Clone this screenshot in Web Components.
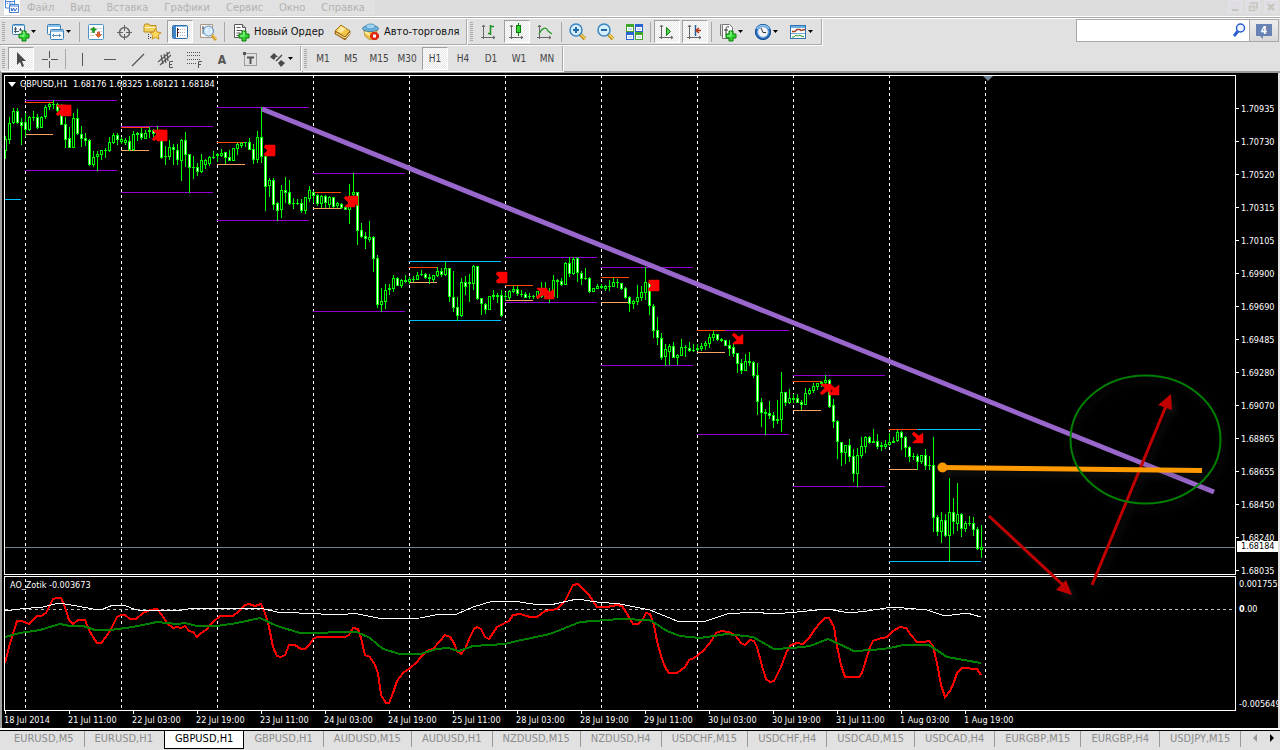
<!DOCTYPE html>
<html lang="ru">
<head>
<meta charset="utf-8">
<title>GBPUSD,H1</title>
<style>
    html, body { height: 100%; margin: 0; }
    body {
        --face: #e1e1e1;
        --shade: #a8a8a8;
        background: var(--face);
        font-family: "DejaVu Sans Condensed", "Noto Sans", sans-serif;
        font-size: 11px;
        color: #111;
        overflow: hidden;
    }
</style>
</head>
<body>
<trade-terminal>
    <app-menu slot="menu" items="Файл,Вид,Вставка,Графики,Сервис,Окно,Справка"></app-menu>

    <tool-bar slot="standard">
        <tool-button icon="newchart" label="Новый график" menu></tool-button>
        <tool-button icon="profiles" label="Профили" menu></tool-button>
        <tool-split></tool-split>
        <tool-button icon="market" label="Обзор рынка"></tool-button>
        <tool-button icon="target" label="Окно данных"></tool-button>
        <tool-button icon="navigator" label="Навигатор"></tool-button>
        <tool-button icon="terminal" label="Терминал" active></tool-button>
        <tool-button icon="tester" label="Тестер стратегий"></tool-button>
        <tool-split></tool-split>
        <tool-button icon="order">Новый Ордер</tool-button>
        <tool-button icon="book" label="MetaEditor"></tool-button>
        <tool-button icon="auto">Авто-торговля</tool-button>
    </tool-bar>
    <tool-bar slot="standard">
        <tool-button icon="bars" label="Бары"></tool-button>
        <tool-button icon="candles" label="Японские свечи" active></tool-button>
        <tool-button icon="line" label="Линия"></tool-button>
        <tool-split></tool-split>
        <tool-button icon="zoomin" label="Увеличить"></tool-button>
        <tool-button icon="zoomout" label="Уменьшить"></tool-button>
        <tool-button icon="tile" label="Окна мозаикой"></tool-button>
        <tool-split></tool-split>
        <tool-button icon="autoscroll" label="Автопрокрутка" active></tool-button>
        <tool-button icon="shift" label="Сдвиг графика" active></tool-button>
        <tool-split></tool-split>
        <tool-button icon="indicators" label="Индикаторы" menu></tool-button>
        <tool-button icon="clock" label="Периоды" menu></tool-button>
        <tool-button icon="template" label="Шаблоны" menu></tool-button>
    </tool-bar>
    <search-box slot="search" count="4"></search-box>

    <tool-bar slot="studies">
        <tool-button icon="cursor" label="Курсор" active></tool-button>
        <tool-button icon="cross" label="Перекрестие"></tool-button>
        <tool-split></tool-split>
        <tool-button icon="vline" label="Вертикальная линия"></tool-button>
        <tool-button icon="hline" label="Горизонтальная линия"></tool-button>
        <tool-button icon="trend" label="Трендовая линия"></tool-button>
        <tool-button icon="channel" label="Канал"></tool-button>
        <tool-button icon="fibo" label="Фибоначчи"></tool-button>
        <tool-button icon="text" label="Текст"></tool-button>
        <tool-button icon="label" label="Текстовая метка"></tool-button>
        <tool-button icon="arrows" label="Стрелки" menu></tool-button>
    </tool-bar>
    <tool-bar slot="studies">
        <tool-button>M1</tool-button>
        <tool-button>M5</tool-button>
        <tool-button>M15</tool-button>
        <tool-button>M30</tool-button>
        <tool-button active>H1</tool-button>
        <tool-button>H4</tool-button>
        <tool-button>D1</tool-button>
        <tool-button>W1</tool-button>
        <tool-button>MN</tool-button>
    </tool-bar>

    <chart-view slot="chart"></chart-view>
    <symbol-tabs slot="tabs" current="2"
        items="EURUSD,M5 EURUSD,H1 GBPUSD,H1 GBPUSD,H1 AUDUSD,M15 AUDUSD,H1 NZDUSD,M15 NZDUSD,H4 USDCHF,M15 USDCHF,H4 USDCAD,M15 USDCAD,H4 EURGBP,M15 EURGBP,H4 USDJPY,M15"></symbol-tabs>
</trade-terminal>

<script>
const AXES = '<path d="M4.5 3v14M2 15.5h14M3 5l1.5-2L6 5M14 14l2 1.5-2 1.5" fill="none" stroke="#666"/>';
const PLUS = '<path d="M11 9h4v3h3v4h-3v3h-4v-3H8v-4h3z" fill="#2fd42f" stroke="#0b7a0b"/><path d="M12 10h1v4h-4" fill="none" stroke="#a6ffa6"/>';
const GLASS = '<path d="M12 12l5 5" stroke="#b98a16" stroke-width="3.5"/><path d="M12.5 12l5 5" stroke="#f7d962" stroke-width="1.5"/><circle cx="8" cy="8" r="6" fill="#d5efff" stroke="#3a86c0" stroke-width="1.5"/>';

const ICONS = {
    newchart: `<rect x="1.5" y="2.5" width="12" height="10" rx="1" fill="#f4f9fd" stroke="#3a80b8"/><path d="M2 3.5h11" stroke="#7fb7e0"/><path d="M4.5 5v6M3 7h3M3 9.5h5M9.5 6v3M8 8h3" stroke="#456" fill="none"/>${PLUS}`,
    profiles: '<rect x="1.5" y="2.5" width="13" height="10" rx="1" fill="#fff" stroke="#3a80b8"/><path d="M2 4h12" stroke="#8cc0e6" stroke-width="2"/><rect x="4.5" y="7.5" width="13" height="10" rx="1" fill="#f4f9fd" stroke="#3a80b8"/><path d="M5 9h12" stroke="#8cc0e6" stroke-width="2"/><path d="M6 13.5h9M7.5 12v3M13.5 12v3" fill="none" stroke="#5b8fb8"/>',
    market: '<rect x="2.5" y="2.5" width="15" height="15" rx="1" fill="#fff" stroke="#4a94cc"/><path d="M4 6.5h2M9 6.5h7M4 10.5h2M12 9.5h4M4 13.5h4" stroke="#d4d4d4"/><path d="M7.500 5l3 3h-2v2.500h-2V8h-2z" fill="#1fa51f" stroke="#0c6d0c" stroke-width=".6"/><path d="M12.500 15.500l-3-3h2V10h2v2.500h2z" fill="#f0602c" stroke="#a5330c" stroke-width=".6"/>'.replace(/\.500/g, '.5'),
    target: '<circle cx="10.5" cy="10.5" r="5" fill="none" stroke="#666" stroke-width="1.5"/><path d="M10.5 3v6M10.5 12v6M3 10.5h6M12 10.5h6" stroke="#666"/>',
    navigator: '<path d="M2 4l1-2h4l1 1.5h6V10H2z" fill="#f3cf5d" stroke="#b88d1f"/><path d="M2.5 5.5h11" stroke="#fff3b8"/><path d="M6.5 12v6M8 15.5h2" stroke="#333" stroke-dasharray="1 1"/><path d="M13.5 6.5l1.7 3.6 3.9.5-2.9 2.7.8 3.9-3.5-2-3.5 2 .8-3.9L7.9 10.6l3.9-.5z" fill="#ffd95a" stroke="#c4912a"/>',
    terminal: '<rect x="2.5" y="3.5" width="15" height="13" rx="1" fill="#fff" stroke="#2f6fae"/><path d="M3 4.5h14" stroke="#8fc1e8"/><rect x="3" y="4" width="3" height="12" fill="#3f86c8"/><path d="M7.5 6v9" stroke="#222"/><path d="M10 7.5h6M10 10.5h6M10 13.5h5" stroke="#b4b4c4" stroke-dasharray="1 1"/><path d="M8 7.5h1M8 10.5h1" stroke="#c00"/>',
    tester: '<path d="M2.5 2.5h12v13h-12z" fill="#f5f5f5" stroke="#a98"/><path d="M5 4v8M4 6h3M12 4v6" stroke="#666"/><circle cx="10.5" cy="9" r="5" fill="#cfeaff" fill-opacity=".85" stroke="#5d8fba"/><path d="M8 9l2-2M13 7v4" stroke="#fff"/><path d="M14 13l4 5" stroke="#d19a24" stroke-width="3"/><path d="M14.5 12.5l4 5" stroke="#f9df7d"/>',
    order: `<path d="M3.5 2.5h8l3 3v10h-11z" fill="#fff" stroke="#555"/><path d="M11.5 2.5v3h3" fill="#ddd" stroke="#555"/><path d="M5.5 5.5h4M5.5 8.5h6M5.5 11h4M5.5 13.5h3" stroke="#555"/>${PLUS}`,
    book: '<path d="M8 3l9 6-5 6-10-6z" fill="#f3c549" stroke="#a2731a"/><path d="M8 4l-4 5 4 2 5-4z" fill="#ffe99b"/><path d="M2 9v3l10 6v-3zM12 15v3l5-6V9z" fill="#b87a1a" stroke="#8b5c10" stroke-width=".6"/><path d="M3 11l9 5 5-5" fill="none" stroke="#f7e3a8"/>',
    auto: '<path d="M3 8h13l-1 7-6 3-5-4z" fill="#f1c548" stroke="#a87b1a" stroke-width=".7"/><path d="M4 10l5 3" stroke="#fff1b0" stroke-width="2"/><ellipse cx="9.5" cy="6.5" rx="8" ry="3" fill="#6fb6de" stroke="#397ba5"/><ellipse cx="9.5" cy="4.5" rx="4.5" ry="2.5" fill="#9cd4f2" stroke="#397ba5" stroke-width=".7"/><path d="M11.5 10h4l2.5 2.5v3L15.500 18h-4L9 15.5v-3z" fill="#e02a10"/><rect x="12" y="12.5" width="3" height="3" fill="#fff"/>'.replace('15.500', '15.5'),
    bars: AXES + '<path d="M11.5 3v10M9 11.5h2M12 4.5h3" fill="none" stroke="#1c8f1c" stroke-width="1.5"/>',
    candles: AXES + '<path d="M11.5 1v13" stroke="#0c7a0c"/><rect x="9.5" y="3.5" width="4" height="7" fill="#32d232" stroke="#0c7a0c"/>',
    line: AXES + '<path d="M4 12c3-6 7-8 9-3l4 3" fill="none" stroke="#2c9a2c" stroke-width="1.3"/>',
    zoomin: GLASS + '<path d="M5 8h6M8 5v6" stroke="#2269a3" stroke-width="2"/>',
    zoomout: GLASS + '<path d="M5 8h6" stroke="#2269a3" stroke-width="2"/>',
    tile: '<path d="M2 2h8v8H2zM11 10h8v8h-8z" fill="#3fa52c"/><path d="M11 2h8v8h-8zM2 10h8v8H2z" fill="#2a62d0"/><path d="M3 5h6v4H3zM12 5h6v4h-6zM3 13h6v4H3zM12 13h6v4h-6z" fill="#fff"/><path d="M4 7h4M13 7h4M4 15h4M13 15h4" stroke="#9bd"/>',
    autoscroll: AXES + '<path d="M9.5 5.5v8l4-4z" fill="#4fd34f" stroke="#128012"/>',
    shift: AXES + '<path d="M10.5 3v11" stroke="#1f5f9c" stroke-width="1.5"/><path d="M11 8.5h5M14 6l-3 2.5 3 2.5" fill="none" stroke="#b2330c" stroke-width="1.3"/>',
    indicators: `<path d="M4.5 2.5h7l3 3v11h-10z" fill="#fff" stroke="#777"/><path d="M3.5 2.5h-1v11h1" fill="none" stroke="#777"/><path d="M11 5c-3-1-3 1-3 3v5M6 8h4" fill="none" stroke="#333"/>${PLUS}`,
    clock: '<circle cx="10" cy="10" r="8" fill="#2a74c8"/><circle cx="10" cy="10" r="7.5" fill="none" stroke="#144a8c"/><path d="M4 7a7 7 0 0 1 12 0" fill="none" stroke="#8cc8f8" stroke-width="1.5"/><circle cx="10" cy="10" r="5.2" fill="#f2f6fa" stroke="#9cb9d6"/><path d="M8 6l2 4.5h3" fill="none" stroke="#333"/>',
    template: '<rect x="2.5" y="3.5" width="15" height="13" fill="#fff" stroke="#2e73b3"/><path d="M3 5h14" stroke="#6daee0" stroke-width="2"/><path d="M3 11.5h14" stroke="#79add8"/><path d="M4 9.5h3l2-2h3l1 1 4-1" fill="none" stroke="#a33c1a" stroke-width="1.3"/><path d="M4 15h2l2-2 2 1 2-1 2 1.5h2" fill="none" stroke="#2c9a2c"/>',
    cursor: '<path d="M6 3v13l3-3 2 5 2-1-2-5h4z" fill="#4a4a4a"/>',
    cross: '<path d="M10.5 2v7M10.5 12v7M3 10.5h6M12 10.5h7" stroke="#555"/>',
    vline: '<path d="M10.5 4v13" stroke="#555"/>',
    hline: '<path d="M4 10.5h12" stroke="#555"/>',
    trend: '<path d="M4 17L16 5" stroke="#555" stroke-width="1.2"/>',
    channel: '<path d="M2 13L14 3M4 16L15 6M5 6l2 9M8 5l2 9M11 3l1 9" stroke="#555" stroke-width="1.2"/><path d="M17 12.5h-3.5v6H17M13.5 15.5H16" fill="none" stroke="#555"/>',
    fibo: '<path d="M3 3.5h14M3 6.5h14M3 10.5h14M3 14.5h9" stroke="#555" stroke-dasharray="1 1"/><path d="M18 12.5h-3.5V19M14.5 15.5H17" fill="none" stroke="#555"/>',
    label: '<rect x="4.5" y="4.5" width="12" height="12" fill="none" stroke="#555" stroke-dasharray="1 1"/><path d="M3 3h3v3H3z" fill="#555"/><path d="M7 8.500h7M10.500 8v7" fill="none" stroke="#555" stroke-width="2"/>'.replace(/\.500/g, '.5'),
    text: '<text x="10" y="15" text-anchor="middle" font-size="12" font-weight="bold" fill="#555">A</text>',
    arrows: '<path d="M6 4l4 4H8l-2 3-4-3z" fill="#4a4a4a"/><path d="M8 12l6-6" stroke="#4a4a4a" stroke-width="1.5"/><path d="M13 11l4 3-4 4-3-4z" fill="#4a4a4a"/>'
};

class TradeTerminal extends HTMLElement {
    constructor() {
        super();
        this.attachShadow({ mode: 'open' }).innerHTML = `
        <style>
            :host { display: flex; flex-direction: column; height: 100vh; }
            .row { display: flex; height: 27px; flex: none; }
            .second { height: 25px; border-bottom: 2px solid #999; }
            .fill { flex: 1; }
            .chart { flex: 1; min-height: 0; display: grid; }
        </style>
        <slot name="menu"></slot>
        <div class="row"><slot name="standard"></slot><span class="fill"></span><slot name="search"></slot></div>
        <div class="row second"><slot name="studies"></slot></div>
        <div class="chart"><slot name="chart"></slot></div>
        <slot name="tabs"></slot>`;
    }
}

class AppMenu extends HTMLElement {
    constructor() {
        super();
        this.attachShadow({ mode: 'open' });
    }

    connectedCallback() {
        const items = this.getAttribute('items').split(',');
        this.shadowRoot.innerHTML = `
        <style>
            :host {
                display: flex; height: 16px; flex: none;
                background: #dcdcdc;
                border-bottom: 1px solid #fff;
                box-shadow: inset 0 -1px var(--shade), inset 0 -2px #fff;
                padding-bottom: 2px;
            }
            nav { display: flex; align-items: center; gap: 16px; background: var(--face); height: 15px; padding: 0 10px 0 4px; }
            a { color: #b2b2b2; text-decoration: none; line-height: 14px; }
            .logo { margin-right: -9px; flex: none; }
            .win { margin-left: auto; display: flex; gap: 4px; padding-right: 2px; }
            button { width: 14px; height: 13px; padding: 0; border: 1px solid #e4e2e8; background: #dfdde2; display: grid; place-items: center; }
        </style>
        <nav>
            <svg class="logo" width="16" height="15" viewBox="0 0 16 15"><path d="M0 0h16v15H0z" fill="#fff"/><path d="M1.5 0v8h4M1.5 1.5h9M10.5 0v4M3 3.5h1M6 2v4M8 3v2M5.5 4.5h9v8h-9zM5 6h10" fill="none" stroke="#4a86d8"/><path d="M7 8l1 3 1.5-3 1.5 3L13 8" fill="none" stroke="#2a62c0"/></svg>
            ${items.map(t => `<a href="#">${t}</a>`).join('')}
        </nav>
        <div class="win">
            <button aria-label="Свернуть"><svg width="10" height="10"><path d="M2 8h6" stroke="#c6c6ba" stroke-width="2"/></svg></button>
            <button aria-label="Восстановить"><svg width="10" height="10"><path d="M3 2V1h6v5H8M1.5 4.5h5v4h-5z" fill="none" stroke="#c6c6ba" stroke-width="1.5"/></svg></button>
            <button aria-label="Закрыть"><svg width="10" height="10"><path d="M2 2l6 6M8 2L2 8" stroke="#c6c6ba" stroke-width="2"/></svg></button>
        </div>`;
    }
}

class ToolBar extends HTMLElement {
    constructor() {
        super();
        this.attachShadow({ mode: 'open' }).innerHTML = `
        <style>
            :host {
                display: flex; align-items: center; gap: 2px; height: 25px;
                padding: 0 3px 0 2px;
                border-right: 1px solid var(--shade);
                border-bottom: 1px solid var(--shade);
                box-shadow: 1px 1px #fff;
                margin-right: 1px;
            }
            :host([slot="studies"]) { border-bottom: 0; padding-right: 2px; }
            .grip { width: 3px; height: 19px; margin-right: 1px; background: repeating-linear-gradient(var(--shade) 0 1px, transparent 1px 2px); }
        </style>
        <span class="grip"></span><slot></slot>`;
    }
}

class ToolSplit extends HTMLElement {
    constructor() {
        super();
        this.attachShadow({ mode: 'open' }).innerHTML = `
        <style>
            :host { display: block; width: 1px; height: 20px; margin: 0 1px; background: var(--shade); }
        </style>`;
    }
}

class ToolButton extends HTMLElement {
    constructor() {
        super();
        this.attachShadow({ mode: 'open' });
    }

    connectedCallback() {
        const icon = this.getAttribute('icon');
        const label = this.getAttribute('label');
        this.shadowRoot.innerHTML = `
        <style>
            :host { display: block; }
            :host([menu]) { margin-right: -2px; }
            button {
                display: flex; align-items: center; justify-content: center;
                min-width: 26px; height: 23px; padding: 0 2px;
                border: 1px solid transparent; background: none;
                font: inherit; color: inherit; white-space: nowrap;
            }
            .frame { font-size: 10px; color: #444; padding: 0; }
            .wide { padding: 0 3px 0 2px; gap: 3px; }
            :host([active]) button {
                border-color: #a0a0a0 #fff #fff #a0a0a0;
                background: repeating-conic-gradient(#fff 0 25%, #e6e6e6 0 50%) 0 0 / 2px 2px;
            }
            svg { flex: none; }
            .drop { margin: 0 2px 0 -2px; }
        </style>
        <button class="${icon ? (label ? '' : 'wide') : 'frame'}" ${label ? `aria-label="${label}"` : ''}>
            ${icon ? `<svg width="20" height="20" viewBox="0 0 20 20">${ICONS[icon]}</svg>` : ''}
            <slot></slot>
            ${this.hasAttribute('menu') ? '<svg class="drop" width="9" height="5"><path d="M2 1h5L4.5 4z"/></svg>' : ''}
        </button>`;
    }
}

class SearchBox extends HTMLElement {
    constructor() {
        super();
        this.attachShadow({ mode: 'open' });
    }

    connectedCallback() {
        this.shadowRoot.innerHTML = `
        <style>
            :host { display: flex; height: 23px; margin-right: 1px; }
            label { display: flex; align-items: center; width: 172px; background: #fff; border: 1px solid var(--shade); }
            input { flex: 1; min-width: 0; border: 0; outline: 0; background: none; font: inherit; }
            button { width: 29px; padding: 0; border: 1px solid var(--shade); border-left: 0; background: linear-gradient(#eee, #d8d8d8); display: grid; place-items: center; }
            text { font: bold 10px "DejaVu Sans Condensed", sans-serif; fill: #fff; }
        </style>
        <label><input type="search" aria-label="Поиск">
            <svg width="18" height="18"><path d="M7 9l-4 5" stroke="#2a5fd0" stroke-width="3"/><circle cx="9.5" cy="6" r="4" fill="#eef6ff" stroke="#2a5fd0" stroke-width="1.5"/></svg>
        </label>
        <button aria-label="Сообщения"><svg width="18" height="18"><path d="M1 2h16v12H8v3l-3-3H1z" fill="#6882b4"/><text x="9" y="12" text-anchor="middle">${this.getAttribute('count')}</text></svg></button>`;
    }
}

// [first bar x, "high top bottom low kind; ..."]: d = falling, u = rising
const BARS = [
    [5, '136 139 151 159 u;117 123 140 144 u;108 111 123 124 u;108 111 123 124 d;118 122 126 145 d'],
    [25, '113 122 130 137 d;116 117 130 131 u;111 117 118 121 u;114 117 128 129 d;116 117 128 128 u;105 107 117 119 u;103 104 107 110 u;100 104 105 109 u;103 104 111 115 d;104 110 125 125 d;117 124 140 148 d;127 138 148 148 d'],
    [73, '113 118 148 148 u;109 118 134 135 d;126 134 139 147 d;133 138 141 146 d;139 140 165 166 d;151 157 165 167 u;151 154 157 171 u;150 150 155 160 u;148 150 151 158 d;137 142 151 152 u;133 135 143 144 u;133 135 140 145 d'],
    [121, '137 139 142 144 u;138 140 143 145 u;136 141 150 151 d;131 134 150 151 u;132 133 135 141 u;128 133 138 140 d;130 133 139 139 u;127 130 132 138 u;129 130 134 137 d;126 130 137 140 d;139 140 158 159 d;146 156 157 165 d'],
    [169, '140 147 157 160 u;144 147 150 165 d;144 150 160 165 d;139 140 161 181 u;132 140 155 167 d;154 154 168 193 d;156 167 168 179 u;163 167 172 176 d;154 160 172 173 u;159 160 165 169 u;156 157 164 166 u;151 157 158 159 u'],
    [217, '153 154 156 162 u;149 153 156 157 u;152 152 158 164 d;150 157 161 161 d;148 148 161 161 u;143 144 149 155 u;142 143 146 148 u;142 142 143 147 u;138 142 150 150 d;144 149 160 164 d;131 137 160 163 u;107 137 157 163 d'],
    [265, '155 156 187 211 d;178 180 186 197 u;178 180 205 210 d;202 203 211 221 d;185 190 210 218 u;177 190 193 203 d;180 192 204 205 d;198 203 204 209 u;199 203 204 205 u;199 203 211 213 d;197 197 211 214 u;186 190 199 202 u'],
    [313, '191 192 196 203 d;194 195 204 206 d;195 196 204 208 u;195 196 203 208 d;196 197 205 208 u;197 197 207 208 d;202 203 206 208 u;203 204 208 209 d;207 207 210 210 d;184 197 210 224 u;173 192 195 207 u;192 192 231 245 d'],
    [361, '223 230 237 238 d;232 236 239 249 d;221 237 240 242 u;236 237 259 272 d;255 258 305 308 d;288 301 305 312 u;284 290 302 309 u;284 288 290 295 d;275 278 289 292 u;277 278 286 286 d;279 280 286 288 u;275 280 282 283 u'],
    [409, '277 279 282 284 u;276 279 280 282 u;272 275 280 280 u;270 274 275 276 u;273 274 278 279 d;274 277 279 284 d;275 275 280 282 u;267 271 276 277 u;268 271 275 277 d;262 268 275 276 u;268 268 297 302 d;271 297 308 312 d'],
    [457, '297 307 316 321 d;278 282 316 317 u;276 282 287 295 d;274 282 284 302 u;265 266 284 290 u;266 266 299 300 d;298 298 304 315 d;303 304 310 314 d;296 296 310 310 u;290 295 297 300 u;293 295 297 303 u;290 295 316 317 d'],
    [505, '292 296 297 301 u;290 291 298 300 u;286 289 292 293 u;286 289 294 296 d;290 294 295 297 u;292 294 298 298 d;293 296 297 299 u;295 296 297 299 u;291 291 297 299 u;282 291 297 298 u;282 290 297 298 d;288 294 297 303 u'],
    [553, '275 280 297 298 u;279 280 282 298 u;278 281 285 286 d;262 263 285 285 u;257 263 274 277 d;257 259 274 275 u;257 258 273 282 d;271 273 279 285 d;268 278 279 280 u;277 278 292 293 d;288 288 292 292 u;284 286 289 289 u'],
    [601, '284 286 288 289 u;285 286 289 291 u;280 286 287 291 u;278 282 287 287 u;279 282 283 288 u;283 283 289 290 d;287 288 298 299 d;296 297 304 312 d;300 301 304 309 u;285 297 302 305 u;286 292 298 301 u;267 282 293 300 u'],
    [649, '282 283 306 315 d;304 306 331 338 d;317 330 338 345 d;333 338 358 360 d;344 349 357 366 u;344 346 352 365 u;342 346 358 358 d;354 355 358 365 u;339 347 356 356 u;345 347 348 357 u;342 348 351 352 d;344 350 351 352 u'],
    [697, '344 348 350 351 u;343 346 349 351 u;341 343 346 350 u;334 337 344 348 u;331 334 338 341 u;334 334 340 341 d;338 339 341 342 d;340 340 346 346 d;340 345 349 356 d;344 347 354 357 d;353 353 364 373 d;359 363 371 374 d'],
    [745, '354 361 371 371 u;352 361 363 366 d;361 362 376 378 d;363 375 402 415 d;398 402 413 427 d;409 412 414 435 d;401 413 416 419 d;412 415 421 428 d;400 419 421 424 d;372 392 420 432 u;392 392 403 406 d;389 398 403 404 u'],
    [793, '394 398 400 403 u;394 398 403 403 d;400 402 405 410 d;388 393 405 405 u;388 390 394 395 u;383 386 391 393 u;383 383 387 390 u;381 382 384 387 u;375 380 383 385 u;379 380 407 408 d;399 405 422 428 d;420 421 442 459 d'],
    [841, '442 442 453 466 d;445 445 453 464 u;439 445 457 462 d;449 456 474 482 d;448 455 474 487 u;437 446 456 458 u;436 437 447 453 u;436 437 443 444 d;429 441 443 443 u;434 441 447 449 d;442 445 447 451 d;440 444 447 449 u'],
    [889, '433 442 445 446 u;437 441 443 443 u;430 432 441 442 u;431 432 438 450 d;436 437 448 457 d;446 447 457 462 d;453 456 457 460 u;454 456 462 470 d;455 455 462 464 u;449 455 466 470 d;456 465 466 470 u;437 465 518 532 d'],
    [937, '515 517 532 536 d;512 520 532 543 u;514 520 536 537 d;478 512 536 561 u;498 512 522 534 d;483 514 524 531 u;513 514 529 537 d;521 523 529 532 u;516 523 524 526 u;517 523 530 536 d;527 529 549 550 d;525 547 550 558 u']
];

// [day x, day high, early high, early low, day low, range colour]
const RANGES = [
    [25, 100, 102, 134, 170, '#9400d3'], [121, 126, 127, 150, 192, '#9400d3'],
    [217, 107, 142, 164, 220, '#9400d3'], [313, 173, 192, 208, 311, '#9400d3'],
    [409, 261, 267, 282, 320, '#00bfff'], [505, 257, 285, 300, 302, '#9400d3'],
    [601, 267, 277, 302, 365, '#9400d3'], [697, 330, 330, 352, 434, '#9400d3'],
    [793, 375, 381, 410, 486, '#9400d3'], [889, 429, 429, 469, 561, '#00bfff']
];

const SIGNALS = [
    [56, 105, 'u'], [60, 105, 'ud'], [152, 130, 'u'], [156, 130, 'ud'], [264, 145, 'ud'],
    [344, 196, 'd'], [347, 196, 'u'], [496, 272, 'ud'], [536, 288, 'u'], [543, 288, 'd'],
    [648, 280, 'ud'], [732, 333, 'd'], [820, 384, 'u'], [828, 384, 'd'], [912, 432, 'd']
];

const RED = '5,663 9,647 17,621 22,621 29,624 34,619 37,616 41,616 46,613 49,607 53,599 57,598 61,598 65,607 69,620 73,624 78,620 85,620 89,630 93,637 97,643 101,643 106,637 111,629 117,617 121,615 125,615 130,619 136,619 143,613 150,610 157,609 162,615 167,623 173,628 177,627 181,628 185,626 189,631 193,632 197,637 201,633 206,630 213,622 220,616 233,616 239,611 245,605 249,604 255,606 261,604 265,613 269,627 273,647 277,656 281,657 285,655 289,645 295,645 301,649 305,649 310,644 313,639 317,637 345,637 349,635 353,628 358,629 361,638 365,655 370,657 375,665 378,673 381,695 386,703 389,703 393,693 397,681 403,673 410,668 417,662 420,658 427,651 433,649 440,641 445,635 450,637 454,643 457,651 461,654 465,649 470,637 474,629 477,627 481,629 485,637 489,639 497,627 505,623 509,621 513,615 520,614 530,617 537,617 545,611 557,609 565,601 569,593 573,585 578,584 583,589 589,595 597,607 607,607 617,605 622,606 626,612 630,619 633,624 638,624 643,619 646,613 650,614 654,625 657,641 661,656 665,667 669,673 677,673 685,667 689,660 694,658 703,651 710,643 716,633 721,631 729,632 735,635 741,643 745,645 750,640 754,641 757,647 762,666 766,679 770,682 774,681 781,667 787,651 791,645 797,643 803,644 809,638 815,629 820,623 825,618 829,618 834,627 837,646 841,665 845,677 859,677 862,673 866,660 870,647 873,641 878,639 887,637 893,631 900,627 906,628 911,635 917,642 923,642 929,641 933,646 937,663 941,685 945,697 950,691 954,682 957,673 962,668 977,669 981,675';
const GREEN = '5,637 20,633 40,630 60,624 70,626 83,626 95,630 110,630 133,627 157,622 177,624 185,623 197,626 217,626 237,623 260,618 277,626 300,633 357,632 370,638 383,649 400,654 420,654 437,649 448,648 459,651 473,646 505,644 517,641 550,634 580,622 620,619 650,620 667,631 680,636 700,638 727,634 753,637 774,649 793,648 810,646 828,639 850,649 853,651 873,650 890,648 903,645 929,645 947,657 981,663';
const WHITE = '5,611 20,609 43,607 59,603 77,606 93,609 103,609 113,605 123,605 137,610 177,611 193,608 230,608 260,608 277,612 343,615 353,613 383,619 420,618 440,614 457,614 473,607 493,601 513,601 533,604 550,605 577,599 597,602 620,604 650,610 677,621 703,622 727,614 753,612 774,614 797,612 827,609 850,613 867,611 893,607 927,610 945,616 967,613 981,617';

const PRICES = ['1.70935', '1.70730', '1.70520', '1.70315', '1.70105', '1.69900', '1.69690', '1.69485', '1.69280', '1.69070', '1.68865', '1.68655', '1.68450', '1.68240', '1.68035'];
const TIMES = ['18 Jul 2014', '21 Jul 11:00', '22 Jul 03:00', '22 Jul 19:00', '23 Jul 11:00', '24 Jul 03:00', '24 Jul 19:00', '25 Jul 11:00', '28 Jul 03:00', '28 Jul 19:00', '29 Jul 11:00', '30 Jul 03:00', '30 Jul 19:00', '31 Jul 11:00', '1 Aug 03:00', '1 Aug 19:00'];

class ChartView extends HTMLElement {
    constructor() {
        super();
        this.attachShadow({ mode: 'open' });
    }

    connectedCallback() {
        this.render();
    }

    candles() {
        let out = '';
        for (const [start, rows] of BARS) {
            rows.split(';').forEach((row, i) => {
                const [h, t, b, l, kind] = row.split(' ');
                const x = start + i * 4;
                out += `<path d="M${x} ${h}h1V${l}h-1z"/><rect x="${x - 1}" y="${t}" width="3" height="${Math.max(1, b - t)}"/>`;
                if (b - t > 2) {
                    out += `<rect x="${x}" y="${+t + 1}" width="1" height="${b - t - 2}" fill="${kind === 'd' ? '#fff' : '#000'}"/>`;
                }
            });
        }
        return out;
    }

    ranges() {
        const hline = (x, y, w, c) => `<rect x="${x}" y="${y}" width="${w}" height="1" fill="${c}"/>`;
        return hline(5, 199, 16, '#00bfff') + RANGES.map(([x, top, hi, lo, bottom, c]) =>
            hline(x, top, 92, c) + hline(x, bottom, 92, c) +
            hline(x, hi, 28, '#ff4500') + hline(x, lo, 28, '#f4a460')).join('');
    }

    signals() {
        const shape = {
            d: 'M0 2L2 0L7 4L11 1V11H1V10L5 7z',
            u: 'M0 9L2 11L7 7L11 10V0H1V1L5 4z'
        };
        return SIGNALS.map(([x, y, kinds]) =>
            [...kinds].map(k => `<path transform="translate(${x} ${y})" d="${shape[k]}"/>`).join('')).join('');
    }

    days(y) {
        let out = '';
        for (let x = 25; x < 990; x += 96) {
            out += `<path d="M${x + 0.5} ${y}v600" stroke="#fff" stroke-dasharray="3 3"/>`;
        }
        return out;
    }

    render() {
        this.shadowRoot.innerHTML = `
        <style>
            :host {
                display: grid;
                grid-template-columns: minmax(0, 1fr) 42px;
                grid-template-rows: minmax(0, 1fr) 135px 17px;
                background: #000; color: #fff;
                font-size: 9px; line-height: 12px;
                border-left: 2px solid #a0a0a0;
                border-right: 2px solid var(--face);
                padding: 2px 0 0 2px;
                position: relative; overflow: hidden;
            }
            .pane { border: 1px solid #fff; position: relative; overflow: hidden; }
            .main { margin-bottom: 1px; }
            .pane svg { display: block; width: 100%; height: 100%; }
            .title { position: absolute; left: 5px; top: 2px; display: flex; align-items: center; white-space: pre; }
            .main .title { left: 2px; }
            .title svg { width: 13px; height: 5px; }
            .axis { position: relative; margin: 0; padding: 18px 0 0; list-style: none; }
            .axis li {
                height: 33px; line-height: 32px; padding-left: 5px;
                background: linear-gradient(#fff, #fff) 0 15px / 3px 1px no-repeat;
            }
            .axis .now { position: absolute; left: 1px; right: 0; top: 466px; height: 11px; background: #fff; color: #000; padding-left: 4px; line-height: 11px; }
            .scale { display: flex; flex-direction: column; padding: 2px 0 1px 3px; white-space: nowrap; }
            .scale span + span { margin-top: 13px; }
            .scale span:last-child { margin-top: auto; }
            .times { display: flex; grid-column: 1 / 3; line-height: 18px; }
            .times span { flex: none; width: 64px; white-space: nowrap; background: linear-gradient(#fff, #fff) 1px 0 / 1px 3px no-repeat; }
            .drawings { position: absolute; left: -2px; top: 0; width: 100%; height: 100%; pointer-events: none; }
            .soft { filter: drop-shadow(4px 5px 3px rgba(60, 60, 60, .3)); }
        </style>
        <div class="pane main">
            <svg><g transform="translate(-5 -76)">
                ${this.days(75)}
                <path d="M5 547.5h3000" stroke="#708090"/>
                ${this.ranges()}
                <g fill="#0f0">${this.candles()}</g>
                <g fill="#f00" stroke="#f00" stroke-width=".5">${this.signals()}</g>
                <path d="M983 76h10l-5 5z" fill="#708090"/>
            </g></svg>
            <div class="title"><svg><path d="M1 0h8L5 5z" fill="#fff"/></svg><span>GBPUSD,H1  1.68176 1.68325 1.68121 1.68184</span></div>
        </div>
        <ul class="axis">${PRICES.map(p => `<li>${p}</li>`).join('')}<li class="now">1.68184</li></ul>
        <div class="pane">
            <svg><g transform="translate(-5 -577)" fill="none">
                ${this.days(579)}
                <path d="M5 609.5h3000" stroke="#c0c0c0" stroke-dasharray="3 3"/>
                <g shape-rendering="crispEdges">
                    <polyline points="${RED}" stroke="#f00" stroke-width="2"/>
                    <polyline points="${GREEN}" stroke="#008000" stroke-width="2"/>
                    <polyline points="${WHITE}" stroke="#fff"/>
                </g>
            </g></svg>
            <div class="title">AO_Zotik -0.003673</div>
        </div>
        <div class="scale"><span>0.001755</span><span><b>0</b>.00</span><span>-0.005649</span></div>
        <div class="times">${TIMES.map(t => `<span>${t}</span>`).join('')}</div>
        <svg class="drawings"><g transform="translate(0 -73)">
            <path d="M262 109L1214 492" stroke="#9966cc" stroke-width="5"/>
            <g class="soft">
                <path d="M989 516L1064 586" stroke="#c00000" stroke-width="3"/>
                <path d="M1072 595l-16-5 10-10z" fill="#c00000"/>
                <path d="M1092 585L1166 406" stroke="#c00000" stroke-width="3"/>
                <path d="M1171 394l1 16-14-5z" fill="#c00000"/>
                <path d="M942 467.5L1202 470.5" stroke="#ff9900" stroke-width="5"/>
                <circle cx="942.5" cy="467.5" r="5" fill="#ff9900"/>
                <ellipse cx="1145.5" cy="439.5" rx="75" ry="64" fill="none" stroke="#008000" stroke-width="2"/>
            </g>
        </g></svg>`;
    }
}

class SymbolTabs extends HTMLElement {
    constructor() {
        super();
        this.attachShadow({ mode: 'open' });
    }

    connectedCallback() {
        const current = Number(this.getAttribute('current'));
        const items = this.getAttribute('items').split(' ');
        this.shadowRoot.innerHTML = `
        <style>
            :host { display: flex; flex: none; height: 19px; border-top: 1px solid #000; box-shadow: 0 -2px #fff; margin-top: 2px; padding-left: 4px; overflow: hidden; }
            button {
                flex: none; height: 16px; padding: 0 10px; border: 0; border-right: 1px solid #999;
                background: none; font: inherit; line-height: 14px; color: #8c8c8c;
            }
            .prev { border-right-color: transparent; }
            .on { height: 19px; margin-top: -1px; padding-bottom: 2px; background: #fff; color: #000; border: 1px solid #000; border-top-color: #fff; }
            .move { display: flex; margin-left: auto; }
            .move button { width: 17px; padding: 0; border: 0; }
        </style>
        ${items.map((t, i) => `<button class="${i === current ? 'on' : i === current - 1 ? 'prev' : ''}">${t}</button>`).join('')}
        <span class="move">
            <button aria-label="Назад"><svg width="6" height="8"><path d="M5 0v8L1 4z" fill="#999"/></svg></button>
            <button aria-label="Вперёд"><svg width="6" height="8"><path d="M1 0v8l4-4z"/></svg></button>
        </span>`;
    }
}

customElements.define('tool-button', ToolButton);
customElements.define('tool-split', ToolSplit);
customElements.define('tool-bar', ToolBar);
customElements.define('app-menu', AppMenu);
customElements.define('search-box', SearchBox);
customElements.define('chart-view', ChartView);
customElements.define('symbol-tabs', SymbolTabs);
customElements.define('trade-terminal', TradeTerminal);
</script>
</body>
</html>
